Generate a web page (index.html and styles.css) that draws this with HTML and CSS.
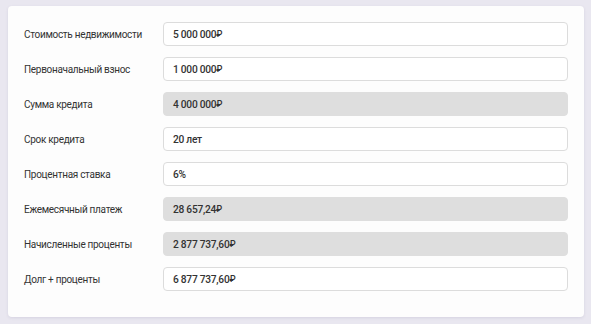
FILE: index.html
```html
<!DOCTYPE html>
<html lang="ru">
<head>
    <meta charset="UTF-8">
    <meta name="viewport" content="width=device-width, initial-scale=1.0">
    <title>Ипотечный калькулятор</title>
    <link rel="stylesheet" href="styles.css">
</head>
<body>
    <div class="calc">
        <label class="calc-label">Стоимость недвижимости</label>
        <div class="calc-field">5 000 000<span class="rub">₽</span></div>

        <label class="calc-label">Первоначальный взнос</label>
        <div class="calc-field">1 000 000<span class="rub">₽</span></div>

        <label class="calc-label">Сумма кредита</label>
        <div class="calc-field readonly">4 000 000<span class="rub">₽</span></div>

        <label class="calc-label">Срок кредита</label>
        <div class="calc-field">20 лет</div>

        <label class="calc-label">Процентная ставка</label>
        <div class="calc-field">6%</div>

        <label class="calc-label">Ежемесячный платеж</label>
        <div class="calc-field readonly">28 657,24<span class="rub">₽</span></div>

        <label class="calc-label">Начисленные проценты</label>
        <div class="calc-field readonly">2 877 737,60<span class="rub">₽</span></div>

        <label class="calc-label">Долг + проценты</label>
        <div class="calc-field">6 877 737,60<span class="rub">₽</span></div>
    </div>
</body>
</html>
```

FILE: styles.css
```css
body {
    margin: 0;
    padding: 6px 7px 7px 8px;
    background: #e9e7f0;
    font-family: Roboto, Arial, sans-serif;
    color: #2b2b2b;
}
.calc {
    display: grid;
    grid-template-columns: 139px 1fr;
    row-gap: 11px;
    align-items: center;
    padding: 16px 16px 26px 16px;
    background: #fdfdfd;
    border-radius: 4px;
    box-shadow: 0 1px 3px rgba(80, 70, 120, 0.12);
}
.calc-label {
    font-size: 10px;
    color: #333;
    white-space: nowrap;
    letter-spacing: -0.3px;
}
.calc-field {
    height: 24px;
    box-sizing: border-box;
    padding: 0 9px;
    display: flex;
    align-items: center;
    border: 1px solid #dcdcdc;
    border-radius: 4px;
    background: #fff;
    font-size: 10.2px;
    font-weight: 500;
    color: #333;
    letter-spacing: -0.25px;
    white-space: pre;
}
.calc-field .rub {
    font-size: 9px;
    margin-left: 0;
}
.calc-field.readonly {
    background: #dedede;
    border-color: #dedede;
}
```
